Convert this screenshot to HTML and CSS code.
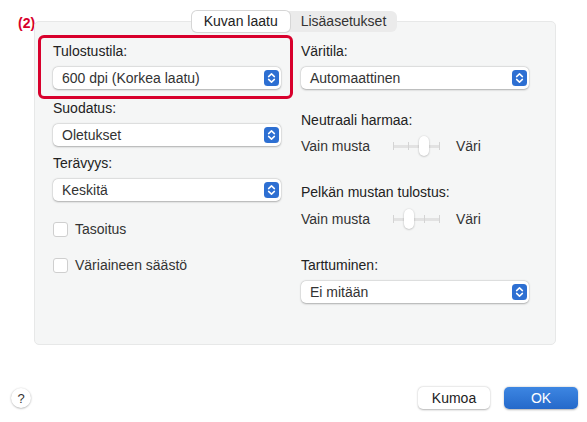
FILE: index.html
```html
<!DOCTYPE html>
<html lang="fi">
<head>
  <meta charset="UTF-8">
  <title>Kuvan laatu</title>
  <meta name="viewport" content="width=device-width, initial-scale=1">
  <link rel="stylesheet" href="styles.css">
</head>
<body>
  <div class="sheet">
    <span class="callout-num">(2)</span>

    <div class="tabs">
      <span class="tab active">Kuvan laatu</span>
      <span class="tab">Lisäasetukset</span>
    </div>

    <div class="panel">
      <div class="callout-box"></div>

      <div class="col">
        <label class="lbl">Tulostustila:</label>
        <div class="popup">
          <span>600 dpi (Korkea laatu)</span>
          <svg class="stepper" width="15" height="16" viewBox="0 0 15 16"><rect width="15" height="16" rx="3.5" fill="#2d6fd2"/><path d="M4.6 6.6 7.5 3.9 10.4 6.6M4.6 9.4 7.5 12.1 10.4 9.4" fill="none" stroke="#fff" stroke-width="1.5" stroke-linecap="round" stroke-linejoin="round"/></svg>
        </div>

        <label class="lbl group">Suodatus:</label>
        <div class="popup">
          <span>Oletukset</span>
          <svg class="stepper" width="15" height="16" viewBox="0 0 15 16"><rect width="15" height="16" rx="3.5" fill="#2d6fd2"/><path d="M4.6 6.6 7.5 3.9 10.4 6.6M4.6 9.4 7.5 12.1 10.4 9.4" fill="none" stroke="#fff" stroke-width="1.5" stroke-linecap="round" stroke-linejoin="round"/></svg>
        </div>

        <label class="lbl group-sm">Terävyys:</label>
        <div class="popup">
          <span>Keskitä</span>
          <svg class="stepper" width="15" height="16" viewBox="0 0 15 16"><rect width="15" height="16" rx="3.5" fill="#2d6fd2"/><path d="M4.6 6.6 7.5 3.9 10.4 6.6M4.6 9.4 7.5 12.1 10.4 9.4" fill="none" stroke="#fff" stroke-width="1.5" stroke-linecap="round" stroke-linejoin="round"/></svg>
        </div>

        <div class="check first"><span class="box"></span>Tasoitus</div>
        <div class="check"><span class="box"></span>Väriaineen säästö</div>
      </div>

      <div class="col">
        <label class="lbl">Väritila:</label>
        <div class="popup">
          <span>Automaattinen</span>
          <svg class="stepper" width="15" height="16" viewBox="0 0 15 16"><rect width="15" height="16" rx="3.5" fill="#2d6fd2"/><path d="M4.6 6.6 7.5 3.9 10.4 6.6M4.6 9.4 7.5 12.1 10.4 9.4" fill="none" stroke="#fff" stroke-width="1.5" stroke-linecap="round" stroke-linejoin="round"/></svg>
        </div>

        <label class="lbl gray-head">Neutraali harmaa:</label>
        <div class="slider-row">
          <span class="end-lbl">Vain musta</span>
          <div class="slider">
            <div class="ticks"><i></i><i></i><i></i><i></i></div>
            <span class="knob pos-2"></span>
          </div>
          <span class="end-lbl right">Väri</span>
        </div>

        <label class="lbl black-head">Pelkän mustan tulostus:</label>
        <div class="slider-row tight">
          <span class="end-lbl">Vain musta</span>
          <div class="slider">
            <div class="ticks"><i></i><i></i><i></i><i></i></div>
            <span class="knob pos-1"></span>
          </div>
          <span class="end-lbl right">Väri</span>
        </div>

        <label class="lbl trap-head">Tarttuminen:</label>
        <div class="popup">
          <span>Ei mitään</span>
          <svg class="stepper" width="15" height="16" viewBox="0 0 15 16"><rect width="15" height="16" rx="3.5" fill="#2d6fd2"/><path d="M4.6 6.6 7.5 3.9 10.4 6.6M4.6 9.4 7.5 12.1 10.4 9.4" fill="none" stroke="#fff" stroke-width="1.5" stroke-linecap="round" stroke-linejoin="round"/></svg>
        </div>
      </div>
    </div>

    <div class="footer">
      <button type="button" class="help">?</button>
      <div class="actions">
        <button type="button" class="btn">Kumoa</button>
        <button type="button" class="btn primary">OK</button>
      </div>
    </div>
  </div>
</body>
</html>
```

FILE: styles.css
```css
body {
  margin: 0;
  background: #fff;
  font-family: "Liberation Sans", Arial, sans-serif;
  font-size: 14px;
  color: #262626;
}
.sheet { position: relative; width: 587px; height: 422px; padding-top: 11px; box-sizing: border-box; }

/* numbered red annotation */
.callout-num {
  position: absolute;
  left: 18px;
  top: 15px;
  color: #d8002c;
  font-weight: bold;
  font-size: 14px;
}
.callout-box {
  position: absolute;
  left: 3px;
  top: 13px;
  width: 255px;
  height: 64px;
  border: 3px solid #d8002c;
  border-radius: 6px;
  box-sizing: border-box;
}

/* segmented tabs */
.tabs {
  position: relative;
  z-index: 1;
  display: flex;
  width: fit-content;
  margin: 0 auto -11px;
  transform: translateX(1px);
  background: #ebebeb;
  border-radius: 6px;
}
.tab {
  height: 21px;
  line-height: 21px;
  padding: 0 11px;
  color: #333;
  border-radius: 5px;
}
.tab.active {
  padding: 0 12px;
  background: #fff;
  color: #222;
  box-shadow: 0 0 0 1px #d6d6d6, 0 1px 1px rgba(0,0,0,0.08);
}

.panel {
  position: relative;
  margin-left: 34px;
  width: 522px;
  height: 324px;
  box-sizing: border-box;
  padding: 21px 28px 0 18px;
  background: #f5f6f6;
  border: 1px solid #e7e8e8;
  border-radius: 5px;
  display: grid;
  grid-template-columns: 228px 228px;
  column-gap: 20px;
  align-content: start;
}
.col { display: flex; flex-direction: column; }
.lbl { display: block; height: 16px; line-height: 16px; color: #222; }
.lbl.group { margin-top: 11px; }
.lbl.group-sm { margin-top: 9px; }
.lbl.gray-head { margin-top: 23px; }
.lbl.black-head { margin-top: 27px; }
.lbl.trap-head { margin-top: 27px; }

/* pop-up menus */
.popup {
  margin-top: 8px;
  height: 22px;
  display: flex;
  align-items: center;
  justify-content: space-between;
  padding: 0 2px 0 9px;
  background: #fff;
  border-radius: 5px;
  box-shadow: 0 0.5px 2px rgba(0,0,0,0.28), 0 0 0 0.5px rgba(0,0,0,0.06);
  color: #333;
}
.stepper { display: block; }

/* checkboxes */
.check { display: flex; align-items: center; height: 16px; margin-top: 20px; color: #333; }
.check.first { margin-top: 20px; }
.check .box {
  width: 13px;
  height: 13px;
  margin-right: 7px;
  background: #fff;
  border: 1px solid #cfcfcf;
  border-radius: 3px;
}

/* sliders */
.slider-row { display: flex; align-items: center; height: 22px; margin-top: 7px; color: #333; }
.slider-row.tight { margin-top: 8px; }
.end-lbl { width: 92px; }
.end-lbl.right { width: auto; margin-left: 16px; }
.slider { position: relative; width: 47px; height: 22px; }
.ticks {
  display: flex;
  justify-content: space-between;
  align-items: center;
  height: 22px;
  background: linear-gradient(#e2e2e2, #e2e2e2) center / 100% 3px no-repeat;
}
.ticks i { width: 1px; height: 8px; background: #d4d4d4; }
.knob {
  position: absolute;
  top: 1px;
  width: 10px;
  height: 20px;
  background: #fff;
  border-radius: 5px;
  box-shadow: 0 0.5px 2px rgba(0,0,0,0.3);
}
.knob.pos-1 { left: 11px; }
.knob.pos-2 { left: 26px; }

/* bottom buttons */
.footer {
  display: flex;
  justify-content: space-between;
  align-items: center;
  margin-top: 42px;
  padding: 0 9px 0 11px;
}
.help {
  width: 20px;
  height: 20px;
  padding: 0;
  border: none;
  border-radius: 50%;
  background: #fff;
  box-shadow: 0 0.5px 2px rgba(0,0,0,0.35);
  font: 13px "Liberation Sans", Arial, sans-serif;
  color: #333;
}
.actions { display: flex; gap: 14px; }
.btn {
  width: 72px;
  height: 22px;
  padding: 0;
  border: none;
  border-radius: 5px;
  background: #fff;
  box-shadow: 0 0.5px 2px rgba(0,0,0,0.3);
  font: 14px "Liberation Sans", Arial, sans-serif;
  color: #222;
}
.btn.primary {
  width: 74px;
  background: linear-gradient(#3d86e2, #2569ca);
  color: #fff;
}
```
